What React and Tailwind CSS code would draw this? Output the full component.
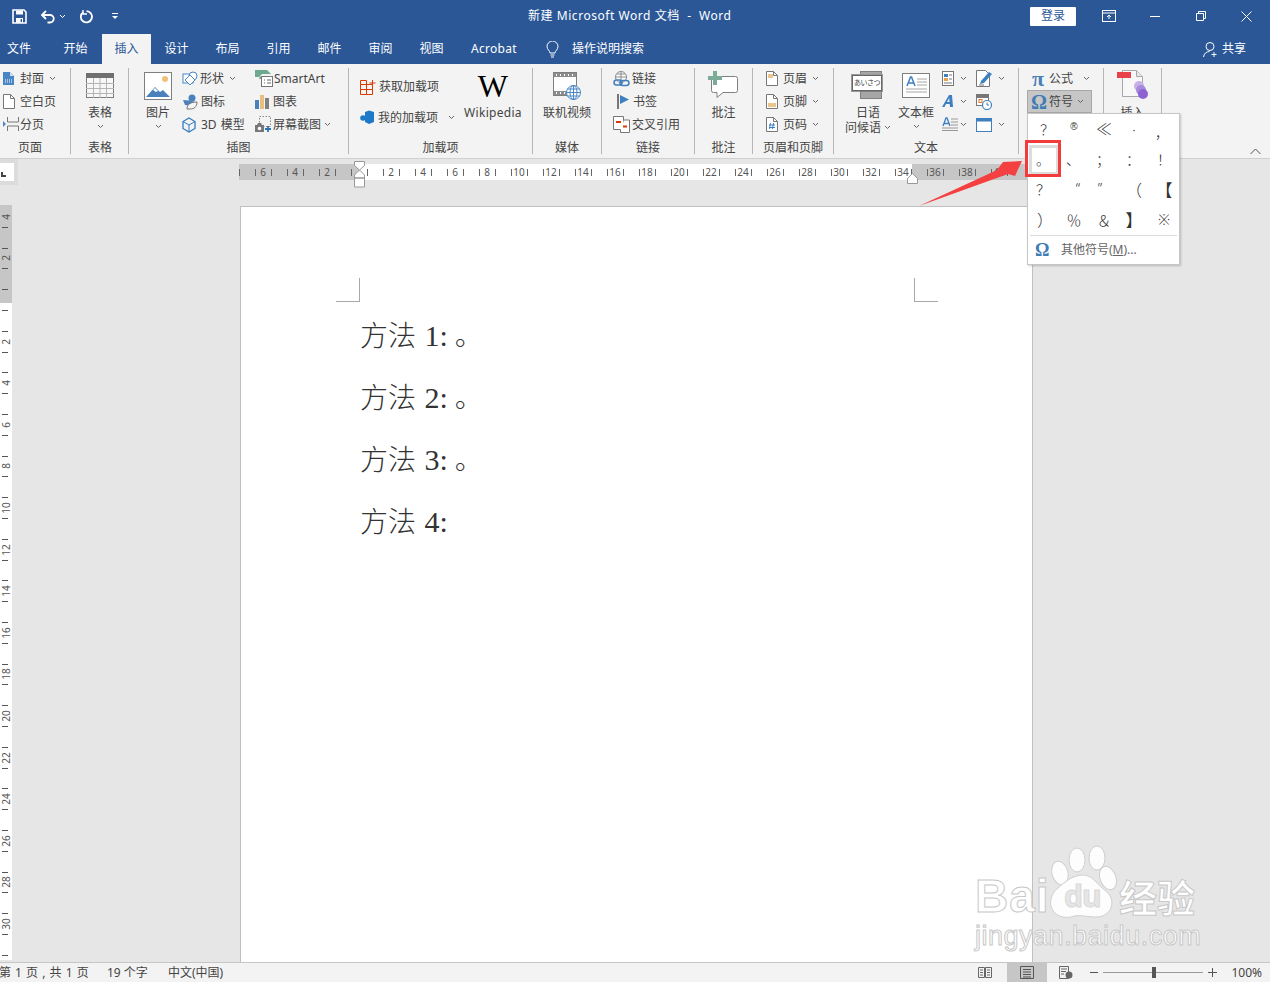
import React from "react";

const Caret = ({ className = "", color = "#666" }) => (
  <svg width="7" height="5" viewBox="0 0 7 5" className={`flex-none ${className}`}>
    <path d="M1 1l2.5 2.5L6 1" fill="none" stroke={color} strokeWidth="1" />
  </svg>
);

const Small = ({ icon, label, caret, labelClass = "ml-[2px]", caretClass = "ml-[5px]" }) => (
  <div className="flex h-[23px] items-center whitespace-nowrap">
    {icon}
    <span className={labelClass}>{label}</span>
    {caret && <Caret className={caretClass} />}
  </div>
);

const Big = ({ icon, lines, caret, className = "", inlineCaret }) => (
  <div className={`flex flex-none flex-col items-center ${className}`}>
    <div className="mb-[1px] flex h-[37px] items-center justify-center">{icon}</div>
    {lines.map((l, i) => (
      <div key={l} className="flex h-[15px] items-center whitespace-nowrap leading-[15px]">
        {l}
        {inlineCaret && i === lines.length - 1 && <Caret className="ml-[3px]" />}
      </div>
    ))}
    {caret && (
      <div className="flex h-[12px] items-center">
        <Caret />
      </div>
    )}
  </div>
);

const Group = ({ label, children, className = "" }) => (
  <div className={`flex h-[86px] flex-none flex-col border-r border-[#b6b6b6] ${className}`}>
    <div className="-mt-px flex h-[70px]">{children}</div>
    <div className="mt-auto -mb-[2px] h-[16px] text-center leading-[16px]">{label}</div>
  </div>
);

const I = ({ w = 16, h = 16, children, className = "" }) => (
  <svg width={w} height={h} viewBox={`0 0 ${w} ${h}`} className={`flex-none ${className}`}>
    {children}
  </svg>
);

/* Title bar icons */
const SaveIcon = () => (
  <I w={15} h={15}>
    <path d="M1 1h11l2 2v11H1z" fill="none" stroke="#fff" strokeWidth="1.6" />
    <path d="M4 1.5h7v4H4z" fill="#fff" />
    <path d="M4 9h7v5H4z" fill="#fff" />
    <path d="M8.6 10h1.4v3H8.6z" fill="#2b5797" />
  </I>
);
const UndoIcon = () => (
  <I w={16} h={15}>
    <path d="M6 2L2 6l4 4" fill="none" stroke="#fff" strokeWidth="1.8" />
    <path d="M2.5 6H10a3.6 3.6 0 0 1 0 7.5H7.5" fill="none" stroke="#fff" strokeWidth="1.8" />
  </I>
);
const RedoIcon = () => (
  <I w={15} h={15}>
    <path d="M4.2 3.2A5.6 5.6 0 1 0 7.5 2.2" fill="none" stroke="#fff" strokeWidth="1.8" />
    <path d="M4 1v4h4" fill="none" stroke="#fff" strokeWidth="1.4" />
  </I>
);

/* Ribbon icons */
const CoverIcon = () => (
  <I w={12} h={15}>
    <path d="M0 1h7l4 4v9H0z" fill="#4a86c5" />
    <path d="M7 1l4 4H7z" fill="#cfe0f2" />
    <path d="M2 9h7M2 11h7" stroke="#fff" strokeWidth="1" strokeDasharray="1 1" />
  </I>
);
const BlankIcon = () => (
  <I w={12} h={15}>
    <path d="M.5.5h7l4 4v10H.5z" fill="#fff" stroke="#777" />
    <path d="M7.5.5v4h4" fill="none" stroke="#777" />
  </I>
);
const BreakIcon = () => (
  <I w={16} h={15}>
    <path d="M0 4l3 3-3 3z" fill="#4a86c5" />
    <path d="M4.5 0v5h11V0M4.5 14V9h11v5" fill="none" stroke="#777" />
  </I>
);
const TableIcon = () => (
  <I w={28} h={25}>
    <rect x=".5" y=".5" width="27" height="24" fill="#f7f7f7" stroke="#7d7d7d" />
    <rect x="0" y="0" width="28" height="5" fill="#6f6f6f" />
    <path d="M0 10.5h28M0 15.5h28M0 20.5h28M7.5 5v20M14 5v20M20.5 5v20" stroke="#b5b5b5" />
  </I>
);
const PictureIcon = () => (
  <I w={28} h={28}>
    <rect x=".5" y=".5" width="27" height="27" fill="#fff" stroke="#7f7f7f" />
    <circle cx="21" cy="7" r="3" fill="#efc078" />
    <path d="M2 25l9-10 5 5 3-2 7 7z" fill="#4a80bb" />
    <path d="M9 18l2-2 3 3-2 1z" fill="#fff" />
  </I>
);
const ShapesIcon = () => (
  <I w={17} h={15}>
    <rect x="1" y="3" width="10" height="9" fill="#fff" stroke="#4a86c5" />
    <circle cx="11" cy="5" r="4" fill="#fff" stroke="#4a86c5" />
    <path d="M8 4l5 5-5 5-5-5z" fill="#fff" stroke="#4a86c5" />
  </I>
);
const IconsIcon = () => (
  <I w={16} h={16}>
    <circle cx="10" cy="4" r="3.5" fill="#4a80bb" />
    <path d="M1 6l6 .5 6 1.5-2 4-8-1z" fill="#4a80bb" />
    <path d="M5 15c0-5 4-7 10-7 0 5-3 7-7 7z" fill="#f4f4f4" stroke="#777" />
  </I>
);
const CubeIcon = () => (
  <I w={14} h={16}>
    <path d="M7 1l6 3.5v7L7 15l-6-3.500v-7z" fill="none" stroke="#2e7cc2" strokeWidth="1.300" />
    <path d="M1 4.500L7 8l6-3.500M7 8v7" fill="none" stroke="#2e7cc2" />
  </I>
);
const SmartArtIcon = () => (
  <I w={18} h={17}>
    <path d="M0 0h12l4 4H7l-3 3H0z" fill="#6ea88e" />
    <path d="M4 9l1-3 3 3z" fill="#6ea88e" />
    <rect x="6.500" y="6.500" width="11" height="10" fill="#fff" stroke="#777" />
    <path d="M9 10h1M12 10h4M9 13h1M12 13h4" stroke="#666" />
  </I>
);
const ChartIcon = () => (
  <I w={15} h={15}>
    <rect x="0" y="6" width="4" height="9" fill="#4a80bb" />
    <rect x="5" y="1" width="4" height="14" fill="#e9bf80" />
    <rect x="10" y="4" width="4" height="11" fill="#808080" />
  </I>
);
const ScreenshotIcon = () => (
  <I w={17} h={17}>
    <rect x="4.500" y=".5" width="11" height="10" fill="none" stroke="#888" strokeDasharray="1.500 1.500" />
    <rect x="0" y="9" width="9" height="7" fill="#777" />
    <path d="M2 9l1-2h3l1 2" fill="#777" />
    <circle cx="4.500" cy="12.500" r="1.800" fill="#fff" />
    <path d="M13 10v6M10 13h6" stroke="#2e75b6" strokeWidth="1.800" />
  </I>
);
const StoreIcon = () => (
  <I w={17} h={16}>
    <path d="M.5 5.500h6v5h-6zM6.500 5.500h6v5h-6zM.5 10.500h6v5h-6zM6.500 10.500h6v5h-6zM.5 1.500h6v4h-6z" fill="none" stroke="#d83b01" />
    <path d="M12.500 1v6M9.500 4h6" stroke="#d83b01" />
  </I>
);
const MyAddinIcon = () => (
  <I w={15} h={15}>
    <circle cx="3" cy="8" r="2.800" fill="#1e78c8" />
    <path d="M5 2l4-1.500L14 2v10l-5 2-4-2z" fill="#1e78c8" />
  </I>
);
const VideoIcon = () => (
  <I w={28} h={28}>
    <rect x=".5" y=".5" width="23" height="23" fill="#fff" stroke="#7f7f7f" />
    <rect x="1" y="1" width="22" height="4" fill="#8c8c8c" />
    <rect x="1" y="19" width="22" height="4" fill="#8c8c8c" />
    <path d="M3 3h1M7 3h1M11 3h1M15 3h1M19 3h1M3 21h1M7 21h1M11 21h1" stroke="#fff" strokeWidth="2" />
    <circle cx="20.500" cy="20.500" r="7" fill="#fff" stroke="#4a86c5" />
    <path d="M13.500 20.500h14M14.500 17h12M14.500 24h12M20.500 13.500v14" stroke="#4a86c5" />
    <ellipse cx="20.500" cy="20.500" rx="3.500" ry="7" fill="none" stroke="#4a86c5" />
  </I>
);
const LinkIcon = () => (
  <I w={17} h={16}>
    <circle cx="8" cy="6" r="5.500" fill="#fff" stroke="#8a8a8a" />
    <path d="M2.500 6h11M8 .5v11M4 3h8" stroke="#8a8a8a" />
    <rect x="1" y="9" width="8" height="5" rx="2.500" fill="none" stroke="#3f7fc0" strokeWidth="1.500" />
    <rect x="7" y="9.500" width="9" height="5" rx="2.500" fill="none" stroke="#3f7fc0" strokeWidth="1.500" />
  </I>
);
const BookmarkIcon = () => (
  <I w={12} h={15}>
    <rect x="0" y="0" width="2" height="15" fill="#777" />
    <path d="M3 1l9 4.500L3 10z" fill="#3f7fc0" />
  </I>
);
const CrossRefIcon = () => (
  <I w={17} h={17}>
    <path d="M.5.5h10v13H.5z" fill="#fff" stroke="#777" />
    <path d="M11 4h5.500v12.500h-9V14" fill="#fff" stroke="#777" />
    <path d="M3 6h5" stroke="#d83b01" strokeWidth="2" />
    <path d="M10 10.500h4" stroke="#d83b01" strokeWidth="2" />
  </I>
);
const CommentIcon = () => (
  <I w={31} h={29}>
    <path d="M3.500 5.500h24a2 2 0 0 1 2 2v12a2 2 0 0 1-2 2H15l-6 5v-5H5.500a2 2 0 0 1-2-2z" fill="#fff" stroke="#808080" />
    <path d="M5 0h4v5h5v4H9v5H5V9H0V5h5z" fill="#7cab97" />
  </I>
);
const HeaderIcon = ({ kind }) => (
  <I w={12} h={15}>
    <path d="M.5.5h7l4 4v10H.5z" fill="#fff" stroke="#777" />
    <path d="M7.500.5v4h4" fill="none" stroke="#777" />
    {kind === "h" && <rect x="2" y="3" width="5" height="4" fill="#eac58c" />}
    {kind === "f" && <rect x="2" y="9" width="8" height="4" fill="#eac58c" />}
    {kind === "n" && <path d="M4.500 6l-1 6M7.500 6l-1 6M3 8h6M3 10.500h6" stroke="#3f7fc0" />}
  </I>
);
const GreetIcon = () => (
  <div className="flex h-[30px] w-[32px] flex-col">
    <div className="ml-[8px] h-[4px] w-[22px] border border-[#808080] bg-[#a6a6a6]" />
    <div className="flex h-[16px] w-[30px] items-center justify-center border border-[#666] bg-white text-[7px] leading-none tracking-[-0.5px] whitespace-nowrap outline outline-1 outline-[#999]">
      あいさつ
    </div>
    <div className="ml-[8px] h-[8px] w-[22px] border border-[#808080] bg-[#a6a6a6]" />
  </div>
);
const TextBoxIcon = () => (
  <I w={28} h={25}>
    <rect x=".5" y=".5" width="27" height="24" fill="#fff" stroke="#7f7f7f" />
    <path d="M5 13l3.500-9h1L13 13M6.500 10h5" fill="none" stroke="#3f7fc0" strokeWidth="1.500" />
    <path d="M15 6h10M15 9h10M15 12h10M4 16h21M4 19h21" stroke="#a6a6a6" />
  </I>
);
const QuickPartsIcon = () => (
  <I w={12} h={15}>
    <rect x=".5" y=".5" width="11" height="14" fill="#fff" stroke="#777" />
    <rect x="2" y="3" width="4" height="3" fill="#3f7fc0" />
    <rect x="2" y="7" width="4" height="3" fill="#e3a34a" />
    <path d="M7 4h3M7 8h3M2 12h8" stroke="#777" />
  </I>
);
const WordArtIcon = () => (
  <I w={12} h={15}>
    <path d="M0 13L7 1h3l1 12H8l-.3-3H4l-1.500 3zM5 8h2.500l-.3-4z" fill="#3f7fc0" fillRule="evenodd" />
  </I>
);
const DropCapIcon = () => (
  <I w={16} h={16}>
    <path d="M1 9l3-8h1l3 8M2 6.500h5" fill="none" stroke="#3f7fc0" strokeWidth="1.300" />
    <path d="M9 2h7M9 5h7M9 8h7M0 11h16M0 13.500h16" stroke="#999" />
  </I>
);
const SignIcon = () => (
  <I w={17} h={17}>
    <path d="M.5.5h9l4 4v12H.5z" fill="#fff" stroke="#777" />
    <path d="M4 14l1-3 8-9 3 2-8 9z" fill="#3f7fc0" />
    <path d="M3 15h5" stroke="#777" />
  </I>
);
const DateIcon = () => (
  <I w={16} h={16}>
    <rect x=".5" y=".5" width="12" height="11" fill="#fff" stroke="#777" />
    <rect x="1" y="1" width="11" height="3" fill="#777" />
    <rect x="3" y="5.500" width="3" height="3" fill="none" stroke="#e3762f" />
    <circle cx="11" cy="11" r="4.500" fill="#fff" stroke="#3f7fc0" strokeWidth="1.200" />
    <path d="M11 8.500V11h2" fill="none" stroke="#3f7fc0" />
  </I>
);
const ObjectIcon = () => (
  <I w={16} h={14}>
    <rect x=".5" y=".5" width="15" height="13" fill="#fff" stroke="#3f7fc0" />
    <rect x="0" y="0" width="16" height="3.500" fill="#3f7fc0" />
  </I>
);
const InsertIcon = () => (
  <I w={32} h={33}>
    <path d="M5.500 1.500h14l6 6v20h-20z" fill="#f8f8f8" stroke="#a8a8a8" />
    <path d="M19.500 1.500v6h6" fill="#e6e6e6" stroke="#a8a8a8" />
    <rect x="0" y="3" width="14" height="6" fill="#e8414a" />
    <circle cx="22" cy="17" r="5" fill="#c7b1e8" />
    <circle cx="24" cy="21" r="5" fill="#a98bdc" />
    <circle cx="26" cy="25" r="5" fill="#8d63d2" />
  </I>
);

const tabs2 = ["设计", "布局", "引用", "邮件", "审阅", "视图"];

const hNums = [];
for (let i = 0; i < 49; i++) {
  let label = "";
  if (i % 2 === 1) {
    const v = i - 7;
    label = v === 0 ? "" : String(Math.abs(v));
  }
  hNums.push(label);
}

const vCells = [];
for (let i = 0; i < 36; i++) {
  const n = i - 4;
  vCells.push(i % 2 === 0 && n !== 0 ? String(Math.abs(n)) : "");
}

const HRuler = () => (
  <div className="flex h-[16px] w-[793px] overflow-hidden bg-[linear-gradient(to_right,#c6c6c6_120px,#fff_120px,#fff_673px,#c6c6c6_673px)]">
    {hNums.map((t, i) => (
      <div key={i} className="relative flex h-full w-[16px] flex-none items-center justify-center text-[10px] leading-none text-[#555]">
        <span className="absolute top-[5px] left-0 h-[7px] w-px bg-[#666]" />
        {t}
      </div>
    ))}
  </div>
);

const VRuler = () => (
  <div className="-mt-px flex h-[757px] w-[12px] flex-none flex-col overflow-hidden bg-[linear-gradient(to_bottom,#c6c6c6_98px,#fff_98px,#fff_755px,#e6e6e6_755px)] pt-[2px]">
    {vCells.map((t, i) => (
      <div key={i} className="flex h-[20.8px] w-full flex-none flex-col">
        <div className="flex flex-1 items-center justify-center">
          <span className="-rotate-90 text-[10px] leading-none text-[#555]">{t}</span>
        </div>
        <div className="ml-[2px] h-px w-[6px] bg-[#555]" />
      </div>
    ))}
  </div>
);

const Line = ({ n, dot }) => (
  <div className="ml-[24px] flex h-[62px] items-baseline text-[28px] leading-[62px] font-light whitespace-pre text-[#333] [font-family:'Liberation_Serif','Noto_Sans_CJK_SC',serif]">
    <span>方法</span>
    <span className="ml-[1px] text-[30px]"> {n}:</span>
    {dot && <span className="ml-[7px]">。</span>}
  </div>
);

const glyphs = [
  ["？", "translate-x-[3px]"], ["®", "text-[10px] -translate-y-[3px] text-[#333] [font-family:'Liberation_Sans',sans-serif]"], ["≪", "text-[16px] -translate-y-[1px]"], ["·", "translate-y-[1px]"], ["，", "-translate-x-[2px] translate-y-[3px]"],
  ["。", "-translate-x-[1px]"], ["、", "-translate-x-[1px]"], ["；", "-translate-x-[1px]"], ["：", "-translate-x-[1px]"], ["！", ""],
  ["？", "-translate-x-[1px]"], ["“", "translate-x-[4px] -translate-y-[1px]"], ["”", "-translate-x-[4px] -translate-y-[1px]"], ["（", "text-[16px]"], ["【", "text-[17px]"],
  ["）", "text-[16px] translate-x-[1px]"], ["％", "translate-x-0 text-[15px]"], ["＆", "text-[15px]"], ["】", "text-[17px]"], ["※", ""],
];

export default function App() {
  return (
    <div className="relative flex h-[982px] w-[1270px] flex-col overflow-hidden bg-[#e6e6e6] text-[12px] text-[#444] [font-family:'Noto_Sans','Noto_Sans_CJK_SC',sans-serif]">
      {/* Title bar */}
      <div className="relative flex h-[32px] flex-none items-center bg-[#2b5797] text-white">
        <div className="ml-[12px]"><SaveIcon /></div>
        <div className="ml-[13px]"><UndoIcon /></div>
        <Caret className="ml-[3px]" color="#fff" />
        <div className="ml-[13px]"><RedoIcon /></div>
        <div className="ml-[18px] flex w-[6px] flex-col items-center gap-[2px]">
          <div className="h-px w-[6px] bg-white" />
          <div className="h-0 w-0 border-x-[3px] border-t-[3px] border-x-transparent border-t-white" />
        </div>
        <div className="ml-[410px] pb-[1px] tracking-[0.55px] whitespace-pre">新建 Microsoft Word 文档  -  Word</div>
        <div className="ml-auto flex items-center">
          <div className="flex h-[19px] w-[46px] items-center justify-center rounded-[1px] bg-white text-[#2b5797]">登录</div>
          <I w={14} h={12} className="ml-[26px]">
            <rect x=".5" y=".5" width="13" height="11" fill="none" stroke="#fff" />
            <path d="M0 3h14M7 9V5M5 7l2-2 2 2" fill="none" stroke="#fff" />
          </I>
          <div className="ml-[34px] h-px w-[10px] bg-white" />
          <I w={10} h={10} className="ml-[36px]">
            <path d="M.5 2.500h7v7h-7zM2.500 2.500v-2h7v7h-2" fill="none" stroke="#fff" />
          </I>
          <I w={11} h={11} className="mr-[18px] ml-[35px]">
            <path d="M.5.5l10 10M10.500.5l-10 10" fill="none" stroke="#fff" />
          </I>
        </div>
      </div>

      {/* Tabs */}
      <div className="flex h-[32px] flex-none items-end bg-[#2b5797] text-white">
        <div className="flex h-[30px] w-[38px] items-center justify-center">文件</div>
        <div className="ml-[12px] flex h-[30px] w-[51px] items-center justify-center">开始</div>
        <div className="ml-px flex h-[30px] w-[49px] items-center justify-center bg-[#f3f3f3] text-[#2b5797]">插入</div>
        <div className="flex">
          {tabs2.map((t) => (
            <div key={t} className="flex h-[30px] w-[51px] items-center justify-center">{t}</div>
          ))}
        </div>
        <div className="ml-[13px] flex h-[30px] w-[48px] items-center justify-center tracking-[0.3px]">Acrobat</div>
        <div className="ml-[28px] flex h-[30px] items-center">
          <I w={13} h={17}>
            <path d="M4 12c0-2-3-3.500-3-6.500a5.500 5.500 0 0 1 11 0C12 8.500 9 10 9 12zM4.500 14h4M5 16h3" fill="none" stroke="#fff" />
          </I>
          <span className="ml-[13px]">操作说明搜索</span>
        </div>
        <div className="mr-[24px] ml-auto flex h-[30px] items-center">
          <I w={15} h={17}>
            <circle cx="7" cy="5.500" r="4" fill="none" stroke="#fff" />
            <path d="M.5 16c.5-3.500 3-5.500 6-5.500M11 11v5M8.500 13.500h5" fill="none" stroke="#fff" />
          </I>
          <span className="ml-[4px]">共享</span>
        </div>
      </div>

      {/* Ribbon */}
      <div className="relative flex h-[95px] flex-none border-b border-[#d0d0d0] bg-[#f3f3f3] pt-[4px]">
        <Group label="页面" className="w-[71px] pr-[10px]">
          <div className="flex flex-col pl-[3px]">
            <Small icon={<CoverIcon />} label="封面" labelClass="ml-[5px]" caret />
            <Small icon={<BlankIcon />} label="空白页" labelClass="ml-[5px]" />
            <Small icon={<BreakIcon />} label="分页" labelClass="ml-px" />
          </div>
        </Group>
        <Group label="表格" className="ml-px w-[57px]">
          <Big className="w-[56px]" icon={<TableIcon />} lines={["表格"]} caret />
        </Group>
        <Group label="插图" className="w-[220px]">
          <Big className="ml-[15px] w-[28px]" icon={<PictureIcon />} lines={["图片"]} caret />
          <div className="ml-[10px] flex w-[73px] flex-col">
            <Small icon={<ShapesIcon />} label="形状" labelClass="ml-px" caret />
            <Small icon={<IconsIcon />} label="图标" labelClass="ml-[3px]" />
            <Small icon={<CubeIcon />} label="3D 模型" labelClass="ml-[5px] [word-spacing:1px]" />
          </div>
          <div className="flex flex-col">
            <Small icon={<SmartArtIcon />} label="SmartArt" labelClass="ml-px" />
            <Small icon={<ChartIcon />} label="图表" labelClass="ml-[3px]" />
            <Small icon={<ScreenshotIcon />} label="屏幕截图" labelClass="ml-px" caret caretClass="ml-[3px]" />
          </div>
        </Group>
        <Group label="加载项" className="w-[184px]">
          <div className="ml-[11px] flex w-[104px] flex-col pt-[4px]">
            <div className="flex h-[31px] items-center">
              <StoreIcon />
              <span className="ml-[2px]">获取加载项</span>
            </div>
            <div className="flex h-[31px] items-center">
              <MyAddinIcon />
              <span className="ml-[3px]">我的加载项</span>
              <Caret className="ml-[10px]" />
            </div>
          </div>
          <Big
            className="w-[58px] tracking-[0.3px]"
            icon={<span className="text-[32px] leading-none text-black [font-family:'Liberation_Serif',serif]">W</span>}
            lines={["Wikipedia"]}
          />
        </Group>
        <Group label="媒体" className="w-[69px]">
          <Big className="w-[68px]" icon={<VideoIcon />} lines={["联机视频"]} />
        </Group>
        <Group label="链接" className="w-[93px]">
          <div className="ml-[11px] flex flex-col">
            <Small icon={<LinkIcon />} label="链接" labelClass="ml-[2px]" />
            <Small icon={<span className="flex w-[17px] justify-end pr-px"><BookmarkIcon /></span>} label="书签" labelClass="ml-[3px]" />
            <Small icon={<CrossRefIcon />} label="交叉引用" labelClass="ml-[2px]" />
          </div>
        </Group>
        <Group label="批注" className="w-[58px]">
          <Big className="w-[57px]" icon={<CommentIcon />} lines={["批注"]} />
        </Group>
        <Group label="页眉和页脚" className="w-[81px]">
          <div className="ml-[13px] flex flex-col">
            <Small icon={<HeaderIcon kind="h" />} label="页眉" labelClass="ml-[5px]" caret />
            <Small icon={<HeaderIcon kind="f" />} label="页脚" labelClass="ml-[5px]" caret />
            <Small icon={<HeaderIcon kind="n" />} label="页码" labelClass="ml-[5px]" caret />
          </div>
        </Group>
        <Group label="文本" className="w-[185px]">
          <Big className="ml-[8px] w-[52px]" icon={<GreetIcon />} lines={["日语", "问候语"]} inlineCaret />
          <Big className="ml-[2px] w-[40px]" icon={<TextBoxIcon />} lines={["文本框"]} caret />
          <div className="ml-[6px] flex w-[34px] flex-col">
            <Small icon={<QuickPartsIcon />} caret caretClass="ml-[6px]" labelClass="" />
            <Small icon={<WordArtIcon />} caret caretClass="ml-[6px]" labelClass="" />
            <Small icon={<DropCapIcon />} caret caretClass="ml-[2px]" labelClass="" />
          </div>
          <div className="flex flex-col">
            <Small icon={<SignIcon />} caret caretClass="ml-[5px]" labelClass="" />
            <Small icon={<DateIcon />} labelClass="" />
            <Small icon={<ObjectIcon />} caret caretClass="ml-[6px]" labelClass="" />
          </div>
        </Group>
        <Group label="" className="w-[85px]">
          <div className="flex flex-col">
            <div className="ml-[12px] flex h-[23px] items-center">
              <span className="w-[14px] text-center text-[22px] leading-none font-bold text-[#4a7fb5] [font-family:'Liberation_Serif',serif]">π</span>
              <span className="ml-[4px]">公式</span>
              <Caret className="ml-[10px]" />
            </div>
            <div className="ml-[8px] flex h-[23px] w-[65px] items-center border border-[#a8a8a8] bg-[#c6c6c6] pl-[3px]">
              <span className="w-[16px] text-center text-[20px] leading-none font-bold text-[#3f7cb5] [font-family:'Liberation_Serif',serif]">Ω</span>
              <span className="ml-[2px]">符号</span>
              <Caret className="ml-[4px]" />
            </div>
          </div>
        </Group>
        <Group label="" className="w-[58px]">
          <Big className="w-[57px]" icon={<InsertIcon />} lines={["插入"]} />
        </Group>
        <I w={11} h={7} className="absolute right-[9px] bottom-[3px]">
          <path d="M.5 6l5-5 5 5" fill="none" stroke="#555" />
        </I>
      </div>

      {/* Horizontal ruler row */}
      <div className="flex h-[47px] flex-none items-start">
        <div className="flex h-[26px] w-[18px] flex-none items-center bg-[#dcdcdc]">
          <div className="relative h-[18px] w-[14px] bg-white">
            <span className="absolute top-[9px] left-[1px] h-[5px] w-[2px] bg-[#444]" />
            <span className="absolute top-[12px] left-[1px] h-[2px] w-[5px] bg-[#444]" />
          </div>
        </div>
        <div className="mt-[5px] ml-[221px]">
          <HRuler />
        </div>
      </div>

      {/* Workspace */}
      <div className="flex min-h-0 flex-1">
        <VRuler />
        <div className="ml-[228px] h-full w-[793px] flex-none border-x border-t border-[#c0c0c0] bg-white pr-[94px] pl-[95px]">
          <div className="mt-[71px] flex justify-between">
            <div className="h-[24px] w-[24px] border-r border-b border-[#a8a8a8]" />
            <div className="h-[24px] w-[24px] border-b border-l border-[#a8a8a8]" />
          </div>
          <div className="mt-[3px]">
            <Line n="1" dot />
            <Line n="2" dot />
            <Line n="3" dot />
            <Line n="4" />
          </div>
        </div>
      </div>

      {/* Status bar */}
      <div className="relative flex h-[20px] flex-none items-center border-t border-[#c6c6c6] bg-[#f3f3f3]">
        <span className="-ml-px w-[108px] whitespace-pre [word-spacing:1px]">第 1 页 , 共 1 页</span>
        <span className="w-[61px]">19 个字</span>
        <span>中文(中国)</span>
        <div className="ml-auto flex h-full items-center">
          <I w={14} h={13}>
            <path d="M.5 1.500h6v10h-6zM7.500 1.500h6v10h-6zM2 4h3M2 6.500h3M2 9h3M9 4h3M9 6.500h3M9 9h3" fill="none" stroke="#666" />
          </I>
          <div className="ml-[15px] flex h-full w-[40px] items-center justify-center bg-[#c6c6c6]">
            <I w={14} h={13}>
              <path d="M.5.5h13v12H.5zM3 3.500h8M3 6h8M3 8.500h8M3 11h8" fill="none" stroke="#555" />
            </I>
          </div>
          <I w={14} h={13} className="ml-[12px]">
            <path d="M.5.5h9v12H.5zM2 3h6M2 5.500h5M2 8h3" fill="none" stroke="#666" />
            <circle cx="10" cy="9" r="3.500" fill="#666" />
          </I>
          <div className="ml-[17px] h-px w-[8px] bg-[#555]" />
          <div className="relative ml-[5px] flex h-[11px] w-[100px] items-center justify-center">
            <div className="h-px w-full bg-[#999]" />
            <div className="absolute top-0 left-[49px] h-[11px] w-[4px] bg-[#555]" />
          </div>
          <I w={9} h={9} className="ml-[5px]">
            <path d="M4.500 0v9M0 4.500h9" stroke="#555" />
          </I>
          <span className="mr-[8px] ml-[14px]">100%</span>
        </div>
      </div>

      {/* Indent markers on ruler */}
      <I w={12} h={28} className="absolute top-[161px] left-[354px]">
        <path d="M.5.5h10v4L5.500 9 .5 4.500zM5.500 9l5 5v3H.5v-3zM.5 17h10v9H.5z" fill="#fff" stroke="#999" />
      </I>
      <I w={12} h={11} className="absolute top-[173px] left-[907px]">
        <path d="M5.500.5l5 5v5H.5v-5z" fill="#fff" stroke="#999" />
      </I>

      {/* Symbol dropdown */}
      <div className="absolute top-[113px] left-[1027px] flex w-[153px] flex-col border border-[#c6c6c6] bg-white p-px shadow-[1px_1px_2px_rgba(0,0,0,0.2)]">
        <div className="grid grid-cols-[repeat(5,30px)] grid-rows-[repeat(4,30px)] text-[14px] leading-none font-light text-[#333]">
          {glyphs.map(([g, c], i) => (
            <div key={i} className={`flex items-center justify-center ${i === 5 ? "border-[3px] border-[#dcdcdc]" : ""}`}>
              <span className={c}>{g}</span>
            </div>
          ))}
        </div>
        <div className="mx-px h-px bg-[#dcdcdc]" />
        <div className="flex h-[27px] items-center pl-[6px] text-[#666]">
          <span className="w-[14px] text-center text-[18px] leading-none font-bold text-[#3f7cb5] [font-family:'Liberation_Serif',serif]">Ω</span>
          <span className="ml-[12px]">其他符号(<span className="underline">M</span>)...</span>
        </div>
      </div>

      {/* Annotations */}
      <div className="absolute top-[140px] left-[1025px] h-[37px] w-[36px] border-[3px] border-[#f33b3b]" />
      <svg width="106" height="50" viewBox="0 0 106 50" className="absolute top-[158px] left-[918px]">
        <path d="M1 48L79 12l6-8 19-1-7 15-7-2z" fill="#f44040" />
      </svg>

      {/* Watermark */}
      <div className="pointer-events-none absolute top-[845px] left-[975px] h-[106px] w-[226px] text-white [-webkit-text-stroke:1px_#c8c8c8]">
        <svg width="84" height="80" viewBox="0 0 84 80" className="absolute top-0 left-[66px]">
          <g fill="#fff" fillOpacity="0.9" stroke="#cfcfcf">
            <ellipse cx="36" cy="15" rx="8" ry="12" />
            <ellipse cx="56" cy="13" rx="8" ry="12" />
            <ellipse cx="19" cy="28" rx="8" ry="12" transform="rotate(-15 19 28)" />
            <ellipse cx="67" cy="33" rx="8" ry="12" transform="rotate(-20 67 33)" />
            <path d="M42 30c10 0 14 10 24 17 10 9 4 26-12 25-8 0-16-3-24 0-16 3-26-11-17-25 7-7 17-17 29-17z" />
          </g>
        </svg>
        <span className="absolute top-[36px] left-[89px] text-[30px] leading-none font-bold tracking-[-1px] text-[#e6e6e6] [-webkit-text-stroke:1px_#d8d8d8]">du</span>
        <span className="absolute top-[28px] left-0 text-[46px] leading-none font-bold tracking-[1px] [font-family:'Liberation_Sans',sans-serif]">Bai</span>
        <span className="absolute top-[32px] left-[144px] text-[38px] leading-none font-bold [font-family:'Noto_Sans_CJK_SC',sans-serif]">经验</span>
        <span className="absolute top-[78px] left-0 text-[27px] leading-none tracking-[0.5px] [font-family:'Liberation_Sans',sans-serif]">jingyan.baidu.com</span>
      </div>
    </div>
  );
}
